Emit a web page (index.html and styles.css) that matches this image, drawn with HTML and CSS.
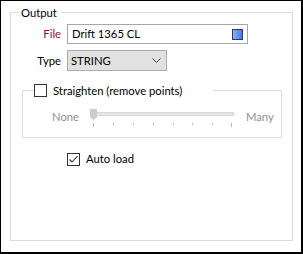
FILE: index.html
```html
<!DOCTYPE html>
<html>
<head>
<meta charset="utf-8">
<link rel="stylesheet" href="styles.css">
</head>
<body>
<div class="window">
  <fieldset class="group">
    <legend class="group-title">Output</legend>
    <div class="form">
      <label class="lbl lbl-req">File</label>
      <div class="textbox">
        <span class="tb-text">Drift 1365 CL</span>
        <svg class="browse" width="11" height="11" viewBox="0 0 11 11">
          <defs>
            <linearGradient id="bg" x1="0" y1="0" x2="1" y2="0">
              <stop offset="0" stop-color="#8fb6f5"/>
              <stop offset="1" stop-color="#3f74e6"/>
            </linearGradient>
          </defs>
          <rect x="0.5" y="0.5" width="10" height="10" fill="url(#bg)" stroke="#2d3b57"/>
        </svg>
      </div>
      <label class="lbl">Type</label>
      <div class="select">
        <span class="sel-text">STRING</span>
        <svg class="chev" width="9" height="5" viewBox="0 0 9 5">
          <polyline points="0.5,0.5 4.5,4.5 8.5,0.5" fill="none" stroke="#444" stroke-width="1"/>
        </svg>
      </div>
    </div>
    <fieldset class="subgroup">
      <legend class="sub-title">
        <span class="check-row">
          <span class="checkbox"></span>
          <span class="check-label">Straighten (remove points)</span>
        </span>
      </legend>
      <div class="slider-row">
        <span class="dim none">None</span>
        <svg class="slider" width="150" height="20" viewBox="0 0 150 20">
          <rect x="2.5" y="5.5" width="143" height="3" fill="#e7e7e7" stroke="#d6d6d6"/>
          <g stroke="#b8b8b8" stroke-width="1">
            <line x1="5.5" y1="16" x2="5.5" y2="20"/>
            <line x1="25.5" y1="16" x2="25.5" y2="18"/>
            <line x1="45.5" y1="16" x2="45.5" y2="18"/>
            <line x1="65.5" y1="16" x2="65.5" y2="18"/>
            <line x1="85.5" y1="16" x2="85.5" y2="18"/>
            <line x1="104.5" y1="16" x2="104.5" y2="18"/>
            <line x1="124.5" y1="16" x2="124.5" y2="18"/>
            <line x1="143.5" y1="16" x2="143.5" y2="20"/>
          </g>
          <polygon points="2,2 9,2 9,10 5.5,13 2,10" fill="#cccccc"/>
        </svg>
        <span class="dim many">Many</span>
      </div>
    </fieldset>
    <div class="check-row autoload">
      <span class="checkbox">
        <svg width="11" height="11" viewBox="0 0 11 11">
          <polyline points="1.5,5.5 4,8 9.5,2" fill="none" stroke="#333" stroke-width="1.1"/>
        </svg>
      </span>
      <span class="check-label">Auto load</span>
    </div>
  </fieldset>
</div>
</body>
</html>
```
FILE: styles.css
```css
html, body {
  margin: 0;
  padding: 0;
  background: #fff;
}
body {
  font-family: Lato, "Liberation Sans", sans-serif;
  font-size: 11.25px;
  line-height: 16px;
  color: #000;
}
.window {
  width: 303px;
  height: 254px;
  box-sizing: border-box;
  border-style: solid;
  border-color: #000;
  border-width: 1px 2px 2px 1px;
  padding: 4px 0 0 9px;
  background: #fff;
}
.group {
  margin: 0;
  width: 283px;
  height: 236px;
  box-sizing: border-box;
  border: 1px solid #dcdcdc;
  padding: 4px 9px 0 11px;
  min-inline-size: 0;
}
.group-title {
  margin-left: -4px;
  padding: 0 4px 0 3px;
  line-height: 15px;
  height: 15px;
}
.form {
  display: grid;
  grid-template-columns: 39px auto;
  column-gap: 6px;
  row-gap: 6px;
  align-items: center;
}
.lbl {
  text-align: right;
}
.lbl-req {
  color: #8b0a3a;
}
.textbox {
  width: 181px;
  height: 20px;
  box-sizing: border-box;
  border: 1px solid #a6a6a6;
  background: #fff;
  display: flex;
  align-items: center;
  padding: 0 4px 0 4px;
}
.browse {
  margin-left: auto;
  display: block;
}
.select {
  width: 100px;
  height: 21px;
  box-sizing: border-box;
  border: 1px solid #adadad;
  background: #e1e1e1;
  display: flex;
  align-items: center;
  padding: 0 5px 0 3px;
}
.chev {
  margin-left: auto;
  display: block;
}
.subgroup {
  margin: 11px 0 0 0;
  width: 260px;
  box-sizing: border-box;
  border: 1px solid #dcdcdc;
  padding: 4px 0 6px 0;
  min-inline-size: 0;
}
.sub-title {
  margin-left: 11px;
  padding: 0;
  width: 179px;
  height: 17px;
}
.check-row {
  display: flex;
  align-items: center;
  gap: 6px;
  height: 17px;
}
.checkbox {
  width: 13px;
  height: 13px;
  box-sizing: border-box;
  border: 1px solid #333;
  background: #fff;
  display: flex;
  align-items: center;
  justify-content: center;
  flex: none;
}
.checkbox svg {
  display: block;
}
.slider-row {
  display: flex;
  align-items: center;
  height: 28px;
  padding-left: 29px;
}
.dim {
  color: #8f8f8f;
}
.none {
  width: 36px;
}
.slider {
  display: block;
  flex: none;
}
.many {
  margin-left: 8px;
}
.autoload {
  margin: 13px 0 0 45px;
  height: 16px;
}
```
